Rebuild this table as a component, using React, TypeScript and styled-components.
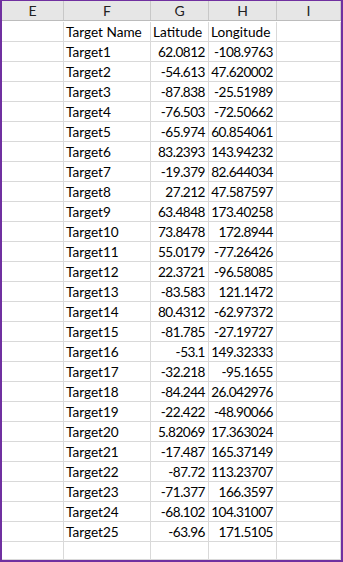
import React from "react";
import styled, { createGlobalStyle } from "styled-components";

const Global = createGlobalStyle`
  html, body {
    margin: 0;
    padding: 0;
    background: #ffffff;
  }
`;

const rows: [string, string, string][] = [
  ["Target1", "62.0812", "-108.9763"],
  ["Target2", "-54.613", "47.620002"],
  ["Target3", "-87.838", "-25.51989"],
  ["Target4", "-76.503", "-72.50662"],
  ["Target5", "-65.974", "60.854061"],
  ["Target6", "83.2393", "143.94232"],
  ["Target7", "-19.379", "82.644034"],
  ["Target8", "27.212", "47.587597"],
  ["Target9", "63.4848", "173.40258"],
  ["Target10", "73.8478", "172.8944"],
  ["Target11", "55.0179", "-77.26426"],
  ["Target12", "22.3721", "-96.58085"],
  ["Target13", "-83.583", "121.1472"],
  ["Target14", "80.4312", "-62.97372"],
  ["Target15", "-81.785", "-27.19727"],
  ["Target16", "-53.1", "149.32333"],
  ["Target17", "-32.218", "-95.1655"],
  ["Target18", "-84.244", "26.042976"],
  ["Target19", "-22.422", "-48.90066"],
  ["Target20", "5.82069", "17.363024"],
  ["Target21", "-17.487", "165.37149"],
  ["Target22", "-87.72", "113.23707"],
  ["Target23", "-71.377", "166.3597"],
  ["Target24", "-68.102", "104.31007"],
  ["Target25", "-63.96", "171.5105"],
];

const columns = "62px 87px 58px 68px 1fr";

const Sheet = styled.div`
  box-sizing: border-box;
  width: 343px;
  height: 562px;
  border: 2px solid #7030a0;
  border-top-width: 1px;
  display: flex;
  flex-direction: column;
  font-family: Lato, "Liberation Sans", sans-serif;
  font-size: 13.6px;
  color: #000;
  overflow: hidden;
`;

const HeaderRow = styled.div`
  display: grid;
  grid-template-columns: ${columns};
  height: 19px;
  background: #e6e6e6;
  border-bottom: 1px solid #bcbcbc;
  flex: none;
`;

const HeaderCell = styled.div`
  border-right: 1px solid #c8c8c8;
  display: flex;
  align-items: center;
  justify-content: center;
  color: #222;
  font-size: 14px;
`;

const Row = styled.div<{ $fill?: boolean }>`
  display: grid;
  grid-template-columns: ${columns};
  height: 20px;
  box-sizing: border-box;
  border-bottom: 1px solid #d9d9d9;
  flex: ${(p) => (p.$fill ? "1" : "none")};
`;

const Cell = styled.div<{ $num?: boolean }>`
  border-right: 1px solid #d9d9d9;
  display: flex;
  align-items: center;
  justify-content: ${(p) => (p.$num ? "flex-end" : "flex-start")};
  padding: ${(p) => (p.$num ? "0 3px 0 0" : "0 0 0 2px")};
  letter-spacing: ${(p) => (p.$num ? "-0.5px" : "0")};
  white-space: nowrap;
  overflow: hidden;
`;

const Body = styled.div`
  display: flex;
  flex-direction: column;
  flex: 1;
  padding-top: 1px;
`;

export default function App() {
  return (
    <>
      <Global />
      <Sheet>
        <HeaderRow>
          {["E", "F", "G", "H", "I"].map((c) => (
            <HeaderCell key={c}>{c}</HeaderCell>
          ))}
        </HeaderRow>
        <Body>
          <Row>
            <Cell />
            <Cell>Target Name</Cell>
            <Cell>Latitude</Cell>
            <Cell>Longitude</Cell>
            <Cell />
          </Row>
          {rows.map(([name, lat, lon]) => (
            <Row key={name}>
              <Cell />
              <Cell>{name}</Cell>
              <Cell $num>{lat}</Cell>
              <Cell $num>{lon}</Cell>
              <Cell />
            </Row>
          ))}
          <Row $fill>
            <Cell />
            <Cell />
            <Cell />
            <Cell />
            <Cell />
          </Row>
        </Body>
      </Sheet>
    </>
  );
}
